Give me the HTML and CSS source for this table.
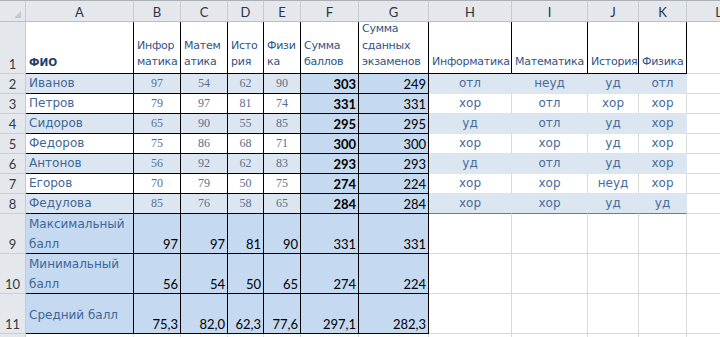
FILE: index.html
```html
<!DOCTYPE html>
<html lang="ru">
<head>
<meta charset="utf-8">
<title>Успеваемость</title>
<link rel="stylesheet" href="styles.css">
</head>
<body>
<div class="sheet">
  <!-- column headers -->
  <div class="ch corner"><span class="tri"></span></div>
  <div class="ch">A</div><div class="ch">B</div><div class="ch">C</div><div class="ch">D</div><div class="ch">E</div><div class="ch">F</div><div class="ch">G</div><div class="ch">H</div><div class="ch">I</div><div class="ch">J</div><div class="ch">K</div><div class="ch">L</div>

  <!-- row 1 -->
  <div class="rh">1</div>
  <div class="c b hd hd-fio">ФИО</div>
  <div class="c b hd">Инфор<br>матика</div>
  <div class="c b hd">Матем<br>атика</div>
  <div class="c b hd">Исто<br>рия</div>
  <div class="c b hd">Физи<br>ка</div>
  <div class="c b hd">Сумма<br>баллов</div>
  <div class="c b hd">Сумма<br>сданных<br>экзаменов</div>
  <div class="c b hd">Информатика</div>
  <div class="c b hd">Математика</div>
  <div class="c b hd">История</div>
  <div class="c b hd">Физика</div>
  <div class="c"></div>

  <!-- row 2 -->
  <div class="rh">2</div>
  <div class="c b band nm">Иванов</div>
  <div class="c b band sc">97</div><div class="c b band sc">54</div><div class="c b band sc">62</div><div class="c b band sc">90</div>
  <div class="c b dk sum">303</div><div class="c b dk tot">249</div>
  <div class="c gb gr">отл</div><div class="c gb gr">неуд</div><div class="c gb gr">уд</div><div class="c gb gr">отл</div>
  <div class="c"></div>

  <!-- row 3 -->
  <div class="rh">3</div>
  <div class="c b nm">Петров</div>
  <div class="c b sc">79</div><div class="c b sc">97</div><div class="c b sc">81</div><div class="c b sc">74</div>
  <div class="c b dk sum">331</div><div class="c b dk tot">331</div>
  <div class="c gw gr">хор</div><div class="c gw gr">отл</div><div class="c gw gr">хор</div><div class="c gw gr">хор</div>
  <div class="c"></div>

  <!-- row 4 -->
  <div class="rh">4</div>
  <div class="c b band nm">Сидоров</div>
  <div class="c b band sc">65</div><div class="c b band sc">90</div><div class="c b band sc">55</div><div class="c b band sc">85</div>
  <div class="c b dk sum">295</div><div class="c b dk tot">295</div>
  <div class="c gb gr">уд</div><div class="c gb gr">отл</div><div class="c gb gr">уд</div><div class="c gb gr">хор</div>
  <div class="c"></div>

  <!-- row 5 -->
  <div class="rh">5</div>
  <div class="c b nm">Федоров</div>
  <div class="c b sc">75</div><div class="c b sc">86</div><div class="c b sc">68</div><div class="c b sc">71</div>
  <div class="c b dk sum">300</div><div class="c b dk tot">300</div>
  <div class="c gw gr">хор</div><div class="c gw gr">хор</div><div class="c gw gr">уд</div><div class="c gw gr">хор</div>
  <div class="c"></div>

  <!-- row 6 -->
  <div class="rh">6</div>
  <div class="c b band nm">Антонов</div>
  <div class="c b band sc">56</div><div class="c b band sc">92</div><div class="c b band sc">62</div><div class="c b band sc">83</div>
  <div class="c b dk sum">293</div><div class="c b dk tot">293</div>
  <div class="c gb gr">уд</div><div class="c gb gr">отл</div><div class="c gb gr">уд</div><div class="c gb gr">хор</div>
  <div class="c"></div>

  <!-- row 7 -->
  <div class="rh">7</div>
  <div class="c b nm">Егоров</div>
  <div class="c b sc">70</div><div class="c b sc">79</div><div class="c b sc">50</div><div class="c b sc">75</div>
  <div class="c b dk sum">274</div><div class="c b dk tot">224</div>
  <div class="c gw gr">хор</div><div class="c gw gr">хор</div><div class="c gw gr">неуд</div><div class="c gw gr">хор</div>
  <div class="c"></div>

  <!-- row 8 -->
  <div class="rh">8</div>
  <div class="c b band nm">Федулова</div>
  <div class="c b band sc">85</div><div class="c b band sc">76</div><div class="c b band sc">58</div><div class="c b band sc">65</div>
  <div class="c b dk sum">284</div><div class="c b dk tot">284</div>
  <div class="c gb gl gr">хор</div><div class="c gb gl gr">хор</div><div class="c gb gl gr">уд</div><div class="c gb gl gr">уд</div>
  <div class="c"></div>

  <!-- row 9 -->
  <div class="rh">9</div>
  <div class="c b dk lbl">Максимальный<br>балл</div>
  <div class="c b dk num">97</div><div class="c b dk num">97</div><div class="c b dk num">81</div><div class="c b dk num">90</div>
  <div class="c b dk num">331</div><div class="c b dk num">331</div>
  <div class="c"></div><div class="c"></div><div class="c"></div><div class="c"></div><div class="c"></div>

  <!-- row 10 -->
  <div class="rh">10</div>
  <div class="c b dk lbl">Минимальный<br>балл</div>
  <div class="c b dk num">56</div><div class="c b dk num">54</div><div class="c b dk num">50</div><div class="c b dk num">65</div>
  <div class="c b dk num">274</div><div class="c b dk num">224</div>
  <div class="c"></div><div class="c"></div><div class="c"></div><div class="c"></div><div class="c"></div>

  <!-- row 11 -->
  <div class="rh">11</div>
  <div class="c b dk lbl lbl-mid">Средний балл</div>
  <div class="c b dk num">75,3</div><div class="c b dk num">82,0</div><div class="c b dk num">62,3</div><div class="c b dk num">77,6</div>
  <div class="c b dk num">297,1</div><div class="c b dk num">282,3</div>
  <div class="c"></div><div class="c"></div><div class="c"></div><div class="c"></div><div class="c"></div>

  <!-- row 12 (only its top edge is visible) -->
  <div class="rh"></div>
  <div class="c"></div><div class="c"></div><div class="c"></div><div class="c"></div><div class="c"></div><div class="c"></div><div class="c"></div><div class="c"></div><div class="c"></div><div class="c"></div><div class="c"></div><div class="c"></div>
</div>
</body>
</html>
```
FILE: styles.css
```css
html, body {
  margin: 0;
  padding: 0;
  background: #ffffff;
  overflow: hidden;
}

.sheet {
  display: grid;
  grid-template-columns: 26px 108px 47px 47px 36px 37px 58px 70px 83px 76px 51px 48px 64px;
  grid-template-rows: 22px 52px 20px 20px 20px 20px 20px 20px 20px 40px 40px 40px 20px;
  width: 751px;
  font-family: "DejaVu Sans", Verdana, sans-serif;
}

.sheet > div {
  box-sizing: border-box;
  border-right: 1px solid #d9d9d9;
  border-bottom: 1px solid #d9d9d9;
  display: flex;
  overflow: hidden;
  white-space: nowrap;
  min-width: 0;
}

/* column headers */
.ch {
  background: #e4e7eb;
  border-top: 1px solid #abb0b6;
  border-right-color: #c5cad0 !important;
  border-bottom-color: #b9bfc7 !important;
  justify-content: center;
  align-items: center;
  font-family: Lato, "Liberation Sans", sans-serif;
  font-size: 13px;
  color: #2b3542;
  padding-top: 1px;
}

.corner {
  position: relative;
}

.tri {
  position: absolute;
  right: 4px;
  bottom: 3px;
  width: 0;
  height: 0;
  border-left: 7px solid transparent;
  border-bottom: 7px solid #c3c7cc;
}

/* row headers */
.rh {
  background: #e4e7eb;
  border-right-color: #c5cad0 !important;
  border-bottom-color: #c9ced4 !important;
  justify-content: center;
  align-items: flex-end;
  font-family: Lato, "Liberation Sans", sans-serif;
  font-size: 13px;
  color: #333a42;
  padding-bottom: 1px;
  line-height: 16px;
}

/* cells */
.c {
  background: #ffffff;
}

.b {
  border-right-color: #000000 !important;
  border-bottom-color: #000000 !important;
}

.band { background: #dce6f1; }
.dk { background: #c5d9f1; }

/* header labels in row 1 */
.hd {
  align-items: flex-end;
  justify-content: flex-start;
  font-size: 11px;
  letter-spacing: -0.25px;
  line-height: 16.6px;
  color: #2e5486;
  padding: 0 0 2px 3px;
}

.hd-fio {
  color: #1f3f6e;
  font-weight: bold;
  font-size: 10.5px;
  letter-spacing: 0;
}

/* names */
.nm {
  align-items: center;
  padding-left: 3px;
  font-size: 12px;
  line-height: 19px;
  color: #3f6698;
}

/* scores */
.sc {
  align-items: center;
  justify-content: center;
  font-family: "Liberation Serif", "Times New Roman", serif;
  font-size: 12px;
  line-height: 19px;
  color: #5a6f92;
}

.sum, .tot {
  align-items: center;
  justify-content: flex-end;
  padding-right: 2px;
  font-family: Lato, "Liberation Sans", sans-serif;
  font-size: 13px;
  color: #000000;
}

.sum { font-weight: bold; }

/* grades */
.gr {
  align-items: center;
  justify-content: center;
  font-size: 12px;
  line-height: 19px;
  color: #466c9c;
}

.gb {
  background: #dce6f1;
  border-right-color: #dce6f1 !important;
  border-bottom-color: #dce6f1 !important;
}

.gw {
  border-bottom-color: #dce6f1 !important;
}

.gl {
  border-bottom-color: #4f81bd !important;
}

/* summary rows */
.lbl {
  align-items: center;
  padding-left: 3px;
  font-size: 12px;
  line-height: 20px;
  color: #3f6698;
  white-space: normal;
}

.lbl-mid {
  padding-top: 2px;
}

.num {
  align-items: flex-end;
  justify-content: flex-end;
  padding: 0 2px 1px 0;
  font-family: Lato, "Liberation Sans", sans-serif;
  font-size: 13px;
  line-height: 16px;
  color: #000000;
}
```
